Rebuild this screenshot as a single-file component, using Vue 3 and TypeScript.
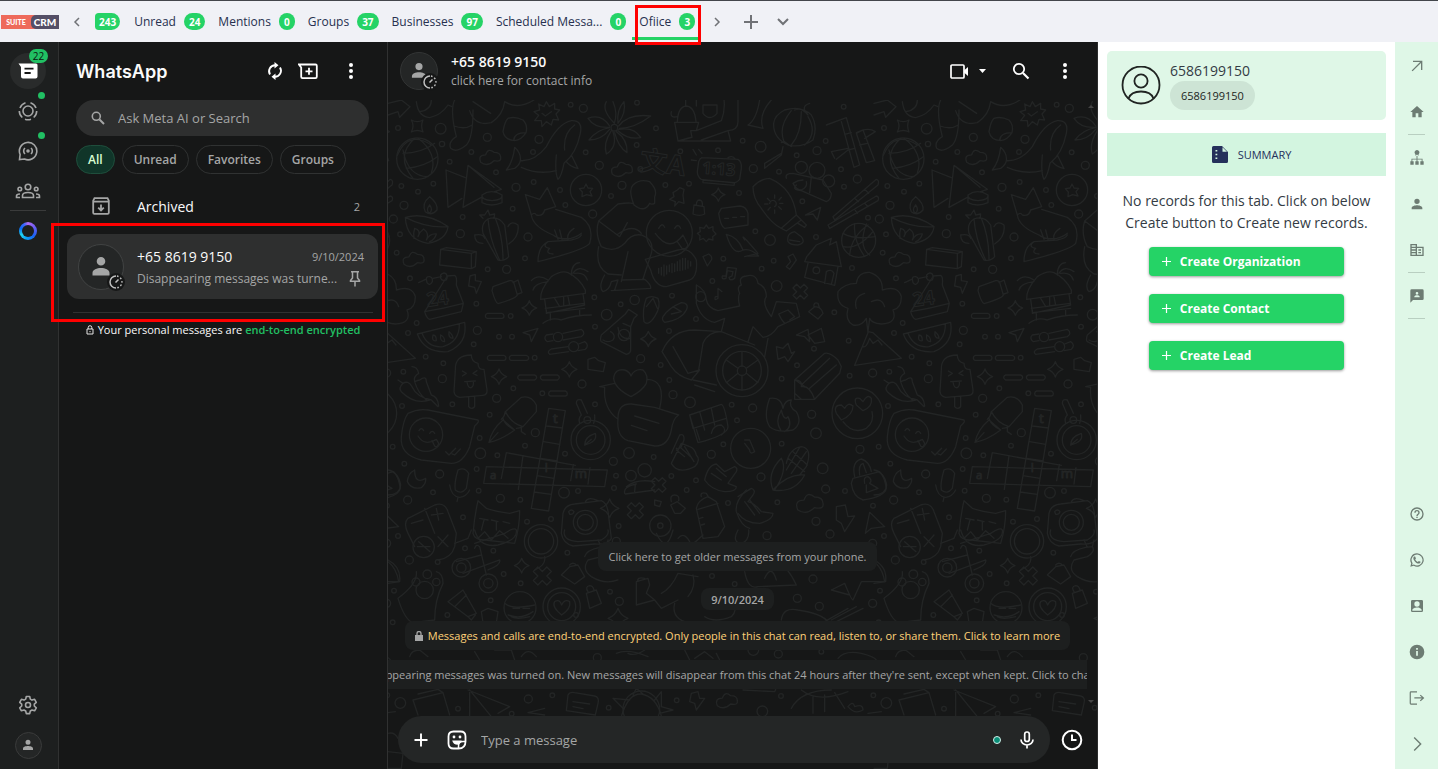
<script setup lang="ts">
import { ref } from 'vue'

interface Tab { label: string; count: number; active?: boolean }
type Dot = [number, number, number]

const tabs: Tab[] = [
  { label: 'Unread', count: 24 },
  { label: 'Mentions', count: 0 },
  { label: 'Groups', count: 37 },
  { label: 'Businesses', count: 97 },
  { label: 'Scheduled Messa...', count: 0 },
  { label: 'Ofiice', count: 3, active: true },
]

const filters = ['All', 'Unread', 'Favorites', 'Groups']
const activeFilter = ref('All')
const search = ref('')
const draft = ref('')

const createActions = ['Create Organization', 'Create Contact', 'Create Lead']

const toolsTop = [
  { name: 'Open', rule: false, d: 'M6 4v2h10.600L4 18.600 5.400 20 18 7.400V18h2V4z' },
  { name: 'Home', rule: true, d: 'M10 20v-6h4v6h5v-8h3L12 3 2 12h3v8z' },
  { name: 'Hierarchy', rule: false, d: 'M12 0a3.600 3.600 0 0 1 2.500 6.200L14 9l-1.200-2h-1.600L10 9l-.5-2.800A3.600 3.600 0 0 1 12 0zM11.300 9h1.400v4h7.600v4H22v5h-5v-5h2v-2.600h-6.300V17h1.800v5h-5v-5h1.800v-2.600H5V17h2v5H2v-5h1.700v-4h7.600z' },
  { name: 'Contact', rule: false, d: 'M12 12a4 4 0 1 0 0-8 4 4 0 0 0 0 8zm0 2c-2.700 0-8 1.300-8 4v2h16v-2c0-2.700-5.300-4-8-4z' },
  { name: 'Company', rule: true, d: 'M12 7V3H2v18h20V7H12zM10 19H4v-2h6v2zm0-4H4v-2h6v2zm0-4H4V9h6v2zm0-4H4V5h6v2zm10 12h-8V9h8v10zm-2-8h-4v2h4v-2zm0 4h-4v2h4v-2z' },
  { name: 'Contact messages', rule: true, d: 'M20 2H4a2 2 0 0 0-2 2v18l4-4h14a2 2 0 0 0 2-2V4a2 2 0 0 0-2-2zm-8 4a2 2 0 1 1 0 4 2 2 0 0 1 0-4zm4 8H8v-1c0-1.300 2.700-2 4-2s4 .7 4 2v1z' },
]
const toolsBottom = [
  { name: 'Help', d: 'M11 18h2v-2h-2v2zm1-16a10 10 0 1 0 0 20 10 10 0 0 0 0-20zm0 18a8 8 0 1 1 0-16 8 8 0 0 1 0 16zm0-14a4 4 0 0 0-4 4h2a2 2 0 1 1 4 0c0 2-3 1.750-3 5h2c0-2.250 3-2.500 3-5a4 4 0 0 0-4-4z' },
  { name: 'WhatsApp', d: 'M12 2a10 10 0 0 0-8.700 15L2 22l5.100-1.300A10 10 0 1 0 12 2zm0 18.200a8.200 8.200 0 0 1-4.600-1.400L4.600 19.500l.8-2.700A8.200 8.200 0 1 1 12 20.200zM8.500 6.700c-.3 0-.8.1-1.200.6-1.300 1.500-1 3.300.7 5.700 2.200 3 5 4.700 7.200 4.300 1.500-.3 2.200-1.200 2.200-2.500l-2.700-1.400-1.400 1.500c-1.700-.6-3.200-2-4-3.600l1.100-1.400-1-2.800c-.2-.4-.5-.4-.9-.4z' },
  { name: 'Account', d: 'M3 5v14a2 2 0 0 0 2 2h14a2 2 0 0 0 2-2V5a2 2 0 0 0-2-2H5a2 2 0 0 0-2 2zm13 4a4 4 0 1 1-8 0 4 4 0 0 1 8 0zM5 19v-1c0-2.200 4.500-3.600 7-3.600s7 1.400 7 3.600v1z' },
  { name: 'About', d: 'M12 1a11 11 0 1 0 0 22 11 11 0 0 0 0-22zm1.300 16.500h-2.600v-7h2.600v7zm0-9h-2.600V6h2.600v2.500z' },
  { name: 'Log out', d: 'M17.500 7l-1.200 1.200L19.200 11H8v1.800h11.200l-2.900 2.900 1.200 1.300L23 12zM4 3.600h8V2H3a2 2 0 0 0-2 2v16a2 2 0 0 0 2 2h9v-1.600H2.800V3.600z' },
  { name: 'Collapse', d: 'M7 3l1.500-1.500L19 12 8.500 22.500 7 21l9-9z' },
]

/* Wallpaper: one tile is 1458 units wide, three units to a pixel */
const dots: Dot[] = [
  [30,114,7],[158,116,16],[162,162,8],[298,142,12],[250,186,7],[185,215,7],[136,281,7],[90,305,7],[40,288,7],[48,346,12],[16,387,12],[36,433,7],[224,381,7],[217,431,12],[26,488,7],[299,538,7],[356,538,12],[411,505,7],[420,441,12],[374,356,7],[324,247,7],[384,292,12],[437,276,7],[435,186,7],[453,148,12],[548,44,7],[586,55,12],[593,187,7],[634,226,12],[516,300,7],[532,345,7],[614,372,12],[669,318,7],[702,286,12],[747,38,7],[804,115,7],[746,165,7],[757,237,7],[877,184,7],[832,285,7],[903,281,7],[990,181,7],[1064,152,7],[1053,309,7],[1006,506,7],[973,573,7],[924,687,7],[852,617,7],[740,630,14],[698,643,7],[656,674,16],[619,622,7],[621,710,7],[66,565,7],[265,641,7],[86,699,7],[60,729,7],[268,721,12],[257,763,7],[113,800,7],[166,820,7],[163,866,12],[46,845,7],[42,948,7],[193,943,7],[333,740,7],[372,740,7],[368,678,7],[440,803,7],[463,910,7],[582,882,12],[376,895,7],[326,925,12],[305,974,7],[621,943,7],[758,806,12],[818,825,7],[843,723,7],[844,870,7],[855,914,12],[906,937,16],[1031,944,7],[1047,991,7],[1006,1063,7],[970,1093,12],[850,1158,7],[924,1171,7],[896,1200,7],[797,1101,7],[723,1089,16],[676,1114,12],[684,1157,7],[678,1194,7],[531,1091,7],[442,1028,12],[411,1067,7],[277,1090,16],[275,1044,7],[328,1096,7],[266,1137,7],[155,1152,12],[49,1121,7],[14,1070,7],[135,1207,7],[59,1230,12],[272,1202,7],[337,1225,12],[397,1229,7],[417,1295,7],[225,1282,7],[489,1287,7],[528,1208,16],[570,1203,7],[692,1308,7],[1020,1239,7],
  [1118,170,16],[1287,182,12],[1313,153,7],[1226,196,7],[1096,236,12],[1173,245,7],[1359,238,7],[1408,267,12],[1368,290,7],[1243,334,7],[1440,383,7],[1146,450,16],[1102,424,7],[1284,441,7],[1157,512,7],[1121,536,7],[1166,588,16],[1392,534,7],[1339,667,7],[1382,752,7],[1278,776,7],[1227,826,7],[1181,866,7],[1385,857,7],[1454,849,12],[1094,954,12],[1271,973,12],[1284,1030,16],[1181,1061,7],[1119,1161,12],[1304,1135,16],[1313,1197,12],[1168,1237,7],[1371,1203,7],[1416,1078,12],[1284,1294,12],[1455,1247,7],[1367,50,7],
  [30,1338,7],[64,1410,12],[231,1375,7],[316,1382,7],[149,1416,7],[347,1452,7],[398,1480,7],[308,1531,7],[178,1575,7],[18,1502,7],[14,1597,7],[538,1388,7],[666,1505,7],[564,1575,7],[694,1534,12],[685,1354,12],[628,1703,12],[421,1827,12],[493,1816,7],[662,1853,7],[866,1831,7],[210,1856,7],[371,1871,7],[37,1839,16],[1123,1864,16],[1137,1337,12],[1040,1482,7],[972,1458,7],
  [1326,1332,12],[1454,1360,12],[1275,1467,12],[1228,1525,12],[1294,1549,12],[1454,1540,12],[1171,1692,12],[1300,1685,7],[1456,1816,7],[1179,1818,7],[1096,1680,16],
]
const sparkles: Dot[] = [[424,654,22],[333,860,23],[544,838,23],[781,747,23],[991,314,20],[665,1255,28],[401,1427,22],[690,1585,30]]
const clouds: Dot[] = [[308,202,30],[703,238,30],[78,508,30],[1267,1240,38],[1018,1832,30]]
const crosses: Dot[] = [[742,1262,24],[812,1185,22],[1237,605,22],[463,1458,27]]
const rings: Dot[] = [[88,206,62],[594,300,47],[844,430,69],[114,1034,50],[608,1050,59],[608,1050,43],[598,990,10],[510,741,14],[557,770,15],[708,735,17],[1088,1075,60],[1408,970,76],[1412,451,51],[1062,842,78],[1062,842,58],[1062,842,14],[592,1297,36],[592,1297,24],[817,1307,32],[817,1307,8],[770,1141,20],[729,1157,16],[1240,232,18],[1287,241,24],[1322,273,18],[220,1433,28],[220,1433,14],[301,1480,28],[301,1480,14],[110,1500,26],[84,1476,12],[118,1453,13],[145,1476,11],[107,1371,32],[459,1354,50],[459,1354,38],[521,1550,56],[521,1550,42],[396,1553,48],[760,1858,55],[679,113,10],[938,620,15],[1285,541,10]]

const sparkle = ([x, y, s]: Dot) => {
  const k = s / 4
  return `M${x} ${y - s}Q${x + k} ${y - k} ${x + s} ${y}Q${x + k} ${y + k} ${x} ${y + s}Q${x - k} ${y + k} ${x - s} ${y}Q${x - k} ${y - k} ${x} ${y - s}Z`
}
const cloud = ([x, y, s]: Dot) =>
  `M${x - s} ${y + s / 2}Q${x - s * 1.300} ${y - s / 4} ${x - s / 2} ${y - s / 4}Q${x - s / 4} ${y - s} ${x + s / 3} ${y - s / 2}Q${x + s} ${y - s / 2} ${x + s} ${y}Q${x + s * 1.100} ${y + s / 2} ${x + s / 3} ${y + s / 3}Q${x - s / 3} ${y + s} ${x - s} ${y + s / 2}Z`
const cross = ([x, y, s]: Dot) => {
  const h = s / 2
  return `M${x - s} ${y - h}L${x - h} ${y - s}L${x} ${y - h}L${x + h} ${y - s}L${x + s} ${y - h}L${x + h} ${y}L${x + s} ${y + h}L${x + h} ${y + s}L${x} ${y + h}L${x - h} ${y + s}L${x - s} ${y + h}L${x - h} ${y}Z`
}

const doodles: string[] = [
  // globe, ornament, stocking, patch
  'M28 196Q60 120 130 165M45 190Q100 190 140 160M55 235Q110 230 148 200M80 145Q20 200 75 265M90 145Q150 190 130 250M45 180Q60 260 120 260',
  'M85 35Q90 80 125 83Q160 75 180 45L192 50M95 65Q130 60 130 30M0 40L40 30L66 50L35 82L30 65L0 75',
  'M200 30Q185 60 205 140Q180 155 188 175Q205 190 235 165Q255 145 255 60M198 108Q230 120 253 105M245 62Q260 110 310 98Q345 75 350 35M255 35L308 70M350 35Q390 60 438 30',
  'M70 90Q88 100 105 90Q97 107 105 126Q88 117 70 126Q80 107 70 90Z',
  'M360 85Q380 78 405 90Q420 105 414 128Q400 150 380 152Q350 150 345 125Q350 95 360 85M377 152Q378 128 414 128',
  'M475 35L484 50L500 40L500 57L515 60L504 72L512 90L495 88L490 105L475 95L462 110L460 92L440 92L452 76L438 65L455 60L452 42L468 50ZM462 70L472 78L490 65',
  // whale
  'M355 240Q375 215 380 172Q400 190 397 212Q440 215 475 170Q510 100 550 92Q585 90 577 130Q565 190 528 220Q520 260 510 268Q500 250 505 195M355 240L380 235Q395 225 397 212M400 232Q450 255 505 242M550 195L570 236Q545 230 535 215M530 180Q525 130 560 105',
  // star anise
  'M679 100Q640 60 655 35M679 100Q690 70 675 35M690 100Q685 60 708 35M690 100Q715 70 708 35M692 108Q720 70 788 78M694 115Q740 115 788 78M692 118Q740 110 758 143M690 122Q720 150 758 143M685 125Q720 150 717 188M680 128Q690 170 717 188M675 125Q690 170 655 192M670 122Q645 160 655 192M665 118Q640 150 603 150M665 113Q625 120 603 150M665 108Q640 70 600 85M665 112Q620 115 600 85',
  // plant pot and sleeve
  'M860 97L932 97L925 122L908 122L912 142L870 153ZM868 95Q870 50 895 48Q920 50 924 95M868 80Q845 85 850 65M893 30V48M925 30V48M945 45V70Q965 95 987 70V45ZM908 142L870 153L1028 153L1020 122L940 150M925 122L1000 92Q1012 60 1008 30M1050 30V95Q1050 120 1020 122',
  // strokes near the clock
  'M915 178L925 195M932 178L942 190M910 210L925 212M942 203L1050 208Q1062 215 1060 235L1055 268Q1045 280 1030 278L940 268Q928 260 928 245L932 215Q935 205 942 203M945 270L1040 278L1038 286L945 278ZM1020 203Q1035 195 1042 208',
  'M174 240L232 263M174 240L180 352L222 325M240 226L225 352L280 322M240 226L340 298L320 305M240 226L318 292M282 315Q310 295 342 315Q345 330 312 332Q280 330 282 315V338Q310 352 342 338V315',
  'M594 282L600 294L614 295L606 305L612 318L596 314L582 320L583 306L574 296L588 294Z',
  // oil lamp
  'M52 382Q115 365 180 410Q175 450 120 460Q55 450 52 382Q115 415 180 410M125 320Q100 340 112 365Q130 380 147 360Q150 340 125 320M125 345Q112 360 124 370Q136 360 125 345M78 445Q75 430 80 415Q100 420 90 440Q95 425 107 417Q125 430 115 450Q125 430 145 432Q140 450 125 455',
  // cactus
  'M300 387Q330 375 350 405L362 500Q350 515 330 510L285 430Q278 400 300 387M300 387Q305 450 335 510M322 385Q345 440 345 508M285 385L275 375L290 375L300 360L305 375L320 372L318 385M285 460Q260 460 260 435Q285 430 290 445M362 462Q395 440 390 405Q370 390 360 410',
  'M158 478L175 473L265 485L262 530L250 536L155 525ZM158 478L250 490L250 536M250 490L265 485',
  // fox
  'M412 314L430 375Q440 365 445 375Q465 380 470 360L503 350L478 293L455 328L412 314M430 375Q435 410 495 435Q515 450 548 445Q570 440 580 430M503 358L580 382Q620 410 605 460Q590 480 450 515Q450 470 480 455L550 450Q575 445 580 435M500 420L510 448M515 420L522 448M540 448Q535 430 558 415M480 455Q460 470 485 475Q470 490 495 492',
  // reading figure and speech bubble
  'M632 393L690 342Q740 335 738 345M632 393L695 440L718 398M632 393Q620 430 640 470Q680 490 710 460Q730 430 760 435Q800 450 790 490L765 567M632 470Q620 530 660 552L700 555M720 485L700 575M650 555Q630 590 645 605Q665 600 670 575L690 570L680 600M700 570L770 568Q790 585 788 595L670 602M738 345Q720 300 735 285Q755 265 785 275Q810 300 800 320L800 340Q790 345 785 340Q770 370 738 345M690 432Q735 400 760 430',
  'M772 508L870 480Q905 470 925 510Q930 560 905 570L835 590Q800 590 788 540ZM812 535V550M820 532V555M828 525V558M836 528V552M844 525V545M852 520V548M860 522V545M868 515V542M876 510V542M884 505V540M892 505V538M900 512V535M908 515V528',
  'M812 415Q822 395 830 412M860 415Q870 398 878 415M802 430Q845 490 885 435L900 465Q895 480 882 475L868 455',
  // pushpin, lock, note, gear
  'M855 308L868 300L875 293L888 298L885 315L888 340L872 335L860 348L862 335L845 328L858 320ZM918 345L948 350L950 372Q935 380 915 372ZM925 345Q925 330 935 330Q945 332 943 348',
  'M935 412L948 415L955 405L962 415L975 410L975 422L984 432L974 440L975 450L962 447L955 455L946 445L935 450L936 437L928 430L937 425Z',
  'M1000 355L1056 348Q1075 350 1080 370V405L1010 415Q998 410 992 370ZM1010 385H1022M1034 382H1046M1058 380H1070M1015 433Q1050 440 1065 480Q1035 500 1015 433M1065 480Q1090 475 1112 498H1080',
  'M945 500L962 492Q975 500 970 510L958 528ZM1018 532L1045 535L1040 565Q1025 575 1023 562L1032 558L1035 545L1018 542L1014 565Q1000 570 1003 558L1014 558ZM990 595L1002 605M990 595V625Q978 635 982 620H990',
  // calendar, bolt, camera
  'M92 578L113 568M135 565L160 560M178 558L200 556Q208 560 205 585L226 640L220 665L125 688Q115 685 110 665ZM110 665Q170 655 226 640',
  'M115 568Q115 558 125 560Q135 562 133 575Q125 590 117 578ZM158 555Q165 545 175 552Q180 560 175 570Q162 575 158 565ZM246 558L262 553L262 572L280 575L265 610L260 592L242 588Z',
  'M315 590L365 572Q375 570 378 580L388 615Q385 625 330 641Q322 638 312 602ZM375 578L390 570L402 608L390 612',
  // beach hut
  'M458 628Q455 600 490 560Q520 540 540 548Q575 565 592 600V610L458 628M470 628L475 665M585 612L590 645L475 670M472 655L588 640M500 625L515 650L545 645L540 620M527 622V648M475 660V668L590 655M487 670V690M575 660V675M465 700Q490 680 520 690Q560 675 610 675M430 572Q450 550 480 570M435 600Q440 580 480 575M550 555Q550 520 575 518M555 550Q570 525 600 545M560 550Q590 545 598 570',
  'M298 670H342Q348 672 348 678Q348 685 342 685H298Q292 684 292 678Q292 672 298 670ZM304 796H348Q354 798 354 803Q354 810 348 811H304Q298 810 298 803Q298 798 304 796ZM370 796H415Q422 798 422 803Q422 810 415 811H370Q364 810 364 803Q364 798 370 796ZM395 855H440Q446 857 446 862Q446 868 440 870H395Q389 868 389 862Q389 857 395 855ZM463 855H508Q514 857 514 862Q514 868 508 870H463Q457 868 457 862Q457 857 463 855ZM488 903H532Q538 905 538 911Q538 917 532 918H488Q482 917 482 911Q482 905 488 903Z',
  'M405 728L450 715L430 755L425 735ZM495 732L475 735Q465 745 478 755L495 752M525 730L580 718Q595 730 580 740L525 750M540 770L490 777Q475 785 485 793L542 785M572 762L590 755Q605 765 592 778L570 782',
  // pizza, sandals
  'M712 672L640 735Q635 750 640 755L715 793Q730 790 728 775V710M712 672L722 658L748 675L738 685L728 710M705 700L728 710M690 712Q695 750 728 745M668 725Q685 735 675 750Q660 760 645 750',
  'M775 625Q790 615 810 625Q820 650 800 680Q780 710 768 695Q762 660 775 625M775 650L795 625L808 655M825 680Q840 655 880 638Q905 640 895 660Q880 690 830 697Q820 690 825 680M855 650L880 665L850 672',
  // flute player and bicycle
  'M925 585Q955 600 955 630Q960 655 990 662L1055 648Q1048 620 1055 610Q1045 590 1060 585Q1050 560 1075 558Q1105 550 1110 580Q1135 590 1135 620Q1120 640 1150 680L1165 635L1225 640L1235 680L1170 710Q1150 740 1125 742L1095 710L1080 755M925 585L925 640Q940 690 980 697L1010 685L1000 725M1000 725Q960 725 945 760L932 840M822 785Q850 720 920 720L1000 725M822 785L850 830Q870 860 910 870L935 840L900 850L855 770M915 870L985 885M920 885L980 905M1000 725L1100 765M1140 745L1130 800M1062 784V828M1062 856V900M1015 810L1050 835M1110 810L1075 835M1015 878L1050 850M1110 878L1075 850',
  'M635 890L650 892Q645 955 690 988M635 890L680 880M729 920Q680 895 677 865Q680 835 710 840Q725 845 729 858Q740 835 765 840Q782 855 775 880Q765 900 729 920M778 868Q835 870 815 955M690 985Q690 940 730 942L800 952L872 975Q855 985 850 1020Q840 1070 800 1068L720 1052Q685 1040 690 985M740 978L813 1000M730 1006L777 1022',
  'M600 808L620 802L632 812L652 818L646 845L600 838ZM905 975L1000 943Q1010 945 1020 1010Q1020 1035 930 1058ZM905 975L915 1015L1015 985M935 965L950 1020M970 955L980 1005M925 1018L935 1050M970 1030Q975 1005 1000 1005Q1020 1020 1000 1035',
  // watermelon, chili, ice lolly
  'M88 732L230 697Q240 760 180 785Q110 790 88 732M102 730Q120 775 165 770Q215 755 214 702M135 735Q145 735 145 752Q130 755 135 735M158 735Q170 740 170 755Q155 755 158 735M183 725Q195 735 195 745Q180 745 183 725',
  'M30 870L45 880Q60 870 72 890Q85 920 130 930Q150 950 150 950M45 880Q30 895 40 905Q80 945 125 930M72 830Q88 830 92 850Q75 860 80 875Q90 870 95 870Q115 855 115 875L130 915Q150 920 152 948M80 875Q90 910 115 930',
  'M250 795Q200 795 202 840L198 905Q200 920 215 922L285 916Q298 915 297 900L288 838Q270 840 270 820Q250 815 250 795M242 922V950Q250 960 260 950V920M223 843L235 850L223 858M267 842L255 850L267 856M230 875L262 873M237 876Q240 895 250 893Q258 888 256 875',
  // chat bubble with smile
  'M60 970Q90 955 120 960L270 990Q275 995 260 1008L245 1070Q225 1120 190 1120L100 1110Q35 1095 40 1040Q45 990 60 970M93 1022Q100 1010 107 1022M125 1030Q133 1018 140 1030M90 1038Q110 1070 145 1048L152 1060Q148 1075 140 1068L132 1052M173 1085L183 1095L203 1075M192 1092L200 1095L217 1077',
  // fountain pen, crossword, keychain
  'M303 1057Q310 1020 345 990L380 1020Q340 1050 303 1057M303 1057L330 1028M340 988Q350 980 352 965L400 922Q430 915 445 945V965L405 1010Q395 1015 385 1015M345 985Q350 1005 380 1020M352 965Q370 1000 405 1010M400 1010V1025L412 1033',
  'M482 955L532 962L482 1263L430 1255ZM295 1130L658 1140L650 1190L287 1180ZM355 1088L562 1126M355 1088L340 1165M405 1097L391 1198M475 1008L524 1014M467 1055L515 1063M459 1105L508 1113M447 1157L498 1165M438 1206L490 1213M556 1124L548 1172M606 1133L600 1182',
  'M565 940Q565 925 580 930L598 970M565 940L580 975Q570 985 575 1000M620 975Q622 985 617 1000M590 1065Q590 1040 622 1030Q630 1055 590 1065L610 1048',
  // hands and people
  'M850 1090L875 1035Q890 1030 888 1050L880 1070Q870 1080 865 1075M880 1060L905 1070Q920 1075 925 1095Q940 1110 920 1130Q870 1155 850 1120ZM865 1080L890 1100M880 1075L908 1100M890 1070L918 1115',
  'M950 1170Q960 1125 985 1122L1010 1145L1040 1130Q1050 1135 1045 1145L1020 1180L1045 1190Q1045 1205 1010 1205Q970 1200 950 1170M970 1150L1000 1170M985 1135L1015 1160M715 1190Q745 1165 800 1175M710 1210Q705 1190 745 1182M712 1212L800 1200M740 1205L742 1182',
  'M0 1140Q30 1145 38 1185Q35 1215 0 1215M80 1140Q60 1150 58 1175Q70 1200 100 1193Q115 1180 113 1165Q80 1185 80 1140M210 1140Q230 1130 242 1150L235 1195Q220 1215 202 1200Q198 1180 210 1140M185 1185Q190 1220 215 1222Q235 1220 245 1200M210 1222L207 1235',
  'M60 1285L140 1245Q170 1235 180 1265L205 1330L200 1370Q190 1405 150 1410M60 1285Q45 1300 60 1330L80 1370M110 1255L140 1330M70 1300L105 1290M130 1275L165 1270M145 1255L152 1290M150 1340L180 1370M150 1370L180 1335M88 1370H126M92 1355L126 1385',
  'M255 1330Q260 1275 270 1232L295 1255Q325 1265 365 1270L395 1262Q395 1310 380 1360L290 1350Q260 1350 255 1330M275 1285L300 1290M288 1290L280 1320M310 1290L330 1295M325 1295V1320M345 1295L365 1300',
  'M520 1330L525 1270Q530 1245 560 1242L640 1232Q660 1240 662 1280L670 1345Q660 1365 620 1362L555 1368Q525 1360 520 1330M592 1235Q600 1218 630 1232M542 1265Q550 1255 558 1265Q555 1275 545 1273Z',
  'M848 1245L868 1235L892 1255L878 1270L860 1270ZM850 1235Q845 1215 860 1215Q875 1215 872 1232M925 1255Q930 1230 960 1220L985 1235L1010 1310L990 1340L945 1345ZM940 1220Q935 1205 955 1210L962 1222M930 1258L990 1240M935 1285L945 1282M940 1305L950 1302M1075 1200Q1040 1235 1045 1265Q1060 1310 1085 1315M800 1230L820 1235L815 1250L800 1245Z',
  // trumpet, lantern, bamboo, chopsticks
  'M1080 105L1125 115Q1110 75 1150 30M1080 105Q1105 90 1115 30M1190 60Q1240 45 1270 75Q1290 110 1275 150Q1240 175 1200 165Q1155 145 1157 100Q1160 75 1190 60M1210 62Q1170 110 1188 155M1240 65Q1240 130 1210 165M1260 80Q1290 130 1250 165M1220 60Q1240 50 1260 75L1250 60Q1245 45 1265 40M1180 158L1190 155L1210 170M1185 170L1180 195L1130 235V220L1180 190',
  'M1315 105L1375 83L1415 225L1398 232L1360 95M1370 133L1390 128M1380 180L1400 175M1405 130L1425 120L1460 212L1435 218ZM1415 165L1438 160M1340 205L1330 185L1380 175M1345 208L1380 180M1405 128Q1440 110 1462 125L1430 145',
  'M1335 380L1465 268Q1475 270 1470 285L1340 390ZM1320 405L1465 318Q1475 320 1470 332L1325 415ZM1400 325L1412 335M1430 298L1442 310M1400 358L1408 370M1430 340L1440 350',
  'M1095 290Q1120 265 1145 265Q1215 295 1225 375L1180 415Q1150 400 1120 355Q1095 325 1095 290M1180 415L1195 423L1240 390L1225 375M1225 375L1255 405L1250 412L1230 400M1145 340A10 10 0 1 1 1160 350M1160 315V325M1138 325L1145 332M1130 342H1140M1140 360L1147 352M1160 370V360M1185 340H1175M1180 322L1173 330M1180 358L1172 350',
  'M1195 265Q1190 250 1215 250L1305 270L1330 310Q1330 330 1315 335L1240 302Q1210 300 1225 285M1270 260L1265 308M1245 270Q1230 270 1215 280Q1225 300 1240 300Q1260 290 1255 275M1252 375L1298 352L1288 390L1275 372Z',
  'M1365 430Q1400 450 1462 440M1365 470Q1410 480 1455 425M1385 495Q1390 440 1440 405M1430 500Q1395 450 1400 402M1435 402Q1410 470 1445 495M1200 455Q1195 430 1220 425L1240 440Q1255 460 1230 465Q1205 465 1200 455M1205 450L1235 455M1070 450Q1050 420 1110 490L1070 500M1256 500Q1265 490 1285 465L1330 445L1325 465L1345 455L1360 530L1250 515ZM1260 520L1250 562L1340 586L1350 530M1310 580L1315 545Q1330 535 1338 550L1330 583',
  'M1200 500L1215 492L1225 510L1205 538L1195 530L1208 515Z',
  // volcano
  'M1405 580Q1410 545 1445 547Q1485 560 1483 600Q1530 585 1540 620Q1540 655 1515 660Q1530 700 1480 702Q1450 700 1445 685L1440 725L1455 728L1540 805L1400 826L1440 728L1435 685Q1420 710 1395 705Q1370 690 1380 655Q1345 645 1350 605Q1370 580 1405 580M1405 655Q1395 620 1430 610M1450 635Q1480 620 1490 650M1425 770Q1435 775 1445 745L1455 760L1470 750L1482 765',
  // pencil, fire, hearts
  'M1220 870L1310 790Q1325 785 1350 810L1360 830L1355 850L1280 928H1220ZM1220 870Q1245 870 1240 890Q1265 885 1280 928M1240 885L1325 805M1265 895L1345 825M1220 910L1240 928M1222 870L1250 890',
  'M1145 925Q1180 920 1185 955Q1190 930 1210 930Q1200 950 1225 965Q1245 1000 1215 1020Q1170 1030 1145 1010Q1125 980 1145 925M1178 1020Q1160 995 1180 960Q1185 985 1195 985L1200 980Q1215 1010 1190 1025',
  'M1345 970Q1335 945 1360 945L1370 955Q1380 935 1395 948Q1395 975 1360 990ZM1405 945Q1395 920 1415 925L1425 935Q1440 910 1450 925Q1455 950 1425 962ZM1365 995Q1395 1035 1435 1015Q1460 995 1452 965',
  // padlock, corn, lion hand
  'M1395 1165L1475 1145Q1490 1160 1495 1195Q1490 1220 1425 1230Q1395 1220 1390 1180ZM1400 1160Q1390 1115 1420 1107Q1445 1115 1450 1145M1415 1155Q1410 1125 1425 1120L1435 1148M1430 1180Q1425 1160 1440 1160Q1455 1170 1445 1180L1470 1195L1435 1208L1435 1185',
  'M1155 1200Q1135 1150 1180 1105Q1200 1140 1160 1200M1155 1200Q1200 1150 1250 1155Q1220 1210 1155 1200M1195 1120Q1205 1075 1240 1070Q1275 1075 1255 1130L1235 1155M1200 1105L1250 1145M1215 1085L1258 1125M1235 1072L1195 1140M1255 1085L1210 1150',
  'M1050 1220L1090 1195Q1105 1200 1095 1215L1080 1235Q1100 1240 1120 1265L1155 1270Q1155 1290 1115 1300Q1070 1300 1050 1270M1070 1235L1100 1275M1085 1230L1115 1270M1345 1250L1372 1245L1380 1280L1400 1278L1370 1325L1360 1300L1345 1290ZM1445 1267L1490 1310L1450 1315L1432 1330Z',
  'M1190 700Q1180 690 1172 672L1200 660L1220 680L1205 690M1225 735L1260 718L1265 755L1250 740ZM1280 760L1260 735L1300 715L1310 755ZM1262 665L1280 650Q1300 650 1305 670L1290 687ZM1278 652Q1275 635 1290 640L1295 655M1165 770L1185 775L1200 760L1210 790L1220 785L1200 815L1190 800L1170 808Z',
  'M1070 1050L1085 1050L1100 1085Q1085 1095 1085 1080L1070 1060',
  // lower rows
  'M260 1360Q290 1350 350 1330Q380 1310 385 1320M260 1320Q275 1375 330 1365Q390 1350 385 1320M270 1345L290 1325L310 1350L335 1322L360 1345M530 1320Q520 1350 570 1355L640 1350Q665 1335 660 1320',
  'M205 1415L280 1395M225 1450L335 1410Q340 1425 300 1440M260 1375Q265 1360 275 1370L295 1455M250 1320L240 1345L200 1360M440 1440Q475 1425 470 1400',
  'M30 1525Q90 1480 85 1445M30 1525Q50 1590 75 1598L140 1590M140 1590Q140 1530 165 1480Q165 1450 145 1445M0 1410Q40 1430 35 1475L0 1480',
  'M180 1535L225 1500L265 1570L240 1580ZM240 1580L250 1590L262 1575M200 1550L235 1515M280 1565L300 1555L330 1565L325 1598M280 1565L285 1598M350 1540Q370 1560 440 1545M360 1575Q400 1590 435 1565M375 1555H395M405 1555H425M370 1580Q385 1590 425 1580',
  'M521 1575Q490 1550 500 1535Q515 1525 521 1545Q530 1525 545 1535Q550 1555 521 1575M545 1430L570 1425L590 1460L560 1482L520 1455ZM545 1425Q555 1415 565 1425',
  'M595 1510L625 1500L640 1540L605 1555ZM600 1505Q590 1490 605 1487Q615 1487 618 1500M590 1400Q595 1380 635 1372L655 1370Q665 1385 640 1400L600 1410Q580 1440 610 1460Q650 1485 690 1470M640 1372L630 1350M655 1370L660 1350',
  'M745 1475L780 1465L785 1485L775 1510L800 1530L745 1545ZM750 1475Q745 1460 770 1465M800 1530L820 1555L870 1530M820 1510Q850 1495 870 1450L930 1460M860 1540Q850 1580 890 1595M900 1520Q925 1490 915 1455M950 1580Q980 1600 1030 1580Q1050 1560 1035 1545M805 1330Q835 1395 855 1320M870 1345Q890 1320 910 1365Q930 1350 945 1335',
  'M1050 1320Q1030 1355 1060 1362Q1085 1350 1082 1320M1070 1445Q1080 1500 1110 1490L1225 1485Q1200 1430 1170 1420M1130 1465Q1150 1420 1165 1470M1330 1500L1370 1480Q1390 1530 1395 1530L1420 1475L1490 1475Q1480 1410 1420 1400M1330 1500L1385 1515M1180 1590Q1185 1550 1230 1560Q1300 1570 1320 1595M1330 1590L1405 1550M1345 1595L1425 1555M1310 1595L1380 1555',
  'M65 1700Q70 1680 95 1680L120 1700M260 1685L275 1710M320 1680H370L380 1710M400 1700Q420 1670 445 1700M685 1690Q720 1675 780 1700M720 1690Q740 1700 770 1680M890 1680L905 1710M920 1705L950 1685L975 1705M985 1690L995 1710M1350 1705Q1370 1680 1420 1690Q1460 1700 1465 1710',
  'M75 1830L165 1808L185 1875M75 1830L90 1875M90 1812L150 1798L165 1808M240 1800L365 1850L330 1870M245 1800L245 1880M245 1800L310 1880M470 1875L420 1868L470 1855',
  'M540 1815Q545 1805 560 1808L620 1818Q635 1822 630 1840L622 1875L535 1862ZM555 1835L605 1842M555 1850L585 1856M700 1880Q720 1810 760 1812Q805 1820 820 1878M705 1855L675 1825L725 1830M735 1815L745 1795L765 1812M800 1830L820 1805L820 1850L855 1860L815 1870M910 1810L930 1805L935 1825L950 1825L925 1860L920 1840L905 1835Z',
  'M1065 1800L1160 1805Q1170 1790 1150 1770M1210 1855Q1240 1800 1330 1800M1240 1800Q1290 1840 1380 1805M1275 1820V1870M1310 1815V1865M1340 1808L1370 1855M1380 1850Q1395 1830 1400 1850Q1425 1840 1425 1860Q1400 1875 1380 1850M1440 1870L1480 1865',
  'M0 1985L45 1990L40 2035H0M0 1930Q20 1925 30 1945',
]
</script>

<template>
  <div class="app">
    <header class="topbar">
      <div class="brand" aria-label="SuiteCRM">
        <span class="brand-suite">SUITE</span><span class="brand-crm">CRM</span>
      </div>
      <button class="plain arrow" aria-label="Previous tabs">
        <svg width="8" height="10" viewBox="0 0 8 10"><path d="M6 1L2 5l4 4" class="ln" /></svg>
      </button>
      <span class="badge first">243</span>
      <nav class="tabs">
        <button v-for="t in tabs" :key="t.label" class="tab" :class="{ active: t.active }">
          <span>{{ t.label }}</span><span class="badge">{{ t.count }}</span>
          <i v-if="t.active" class="mark mark-tab"></i>
        </button>
      </nav>
      <button class="plain arrow next" aria-label="Next tabs">
        <svg width="8" height="10" viewBox="0 0 8 10"><path d="M2 1l4 4-4 4" class="ln" /></svg>
      </button>
      <button class="plain add" aria-label="Add tab">
        <svg width="16" height="16" viewBox="0 0 16 16"><path d="M8 1v14M1 8h14" class="ln" /></svg>
      </button>
      <button class="plain more" aria-label="More tabs">
        <svg width="14" height="9" viewBox="0 0 14 9"><path d="M2 2l5 5 5-5" class="ln" /></svg>
      </button>
    </header>

    <main class="body">
      <nav class="rail">
        <button class="rail-btn current" aria-label="Chats">
          <svg width="20" height="18" viewBox="0 0 20 18"><path d="M.5 1.500H18A1.500 1.500 0 0 1 19.500 3v11.500a2 2 0 0 1-2 2H5a2 2 0 0 1-2-2V5z" fill="#fff" /><path d="M6.500 6.700h9M6.500 11h6.200" stroke="#161717" stroke-width="1.800" /></svg>
          <span class="rail-count">22</span>
        </button>
        <button class="rail-btn" aria-label="Status">
          <svg width="20" height="20" viewBox="0 0 20 20" class="gl"><circle cx="10" cy="10" r="5" /><path d="M12.500 1.700A8.700 8.700 0 0 1 18 7M18.700 10a8.700 8.700 0 0 1-3 6.500M13 18.200a8.700 8.700 0 0 1-6 0M4.300 16.500a8.700 8.700 0 0 1-3-6.500M2 7a8.700 8.700 0 0 1 5.500-5.300" /></svg>
          <i class="dot"></i>
        </button>
        <button class="rail-btn" aria-label="Channels">
          <svg width="20" height="20" viewBox="0 0 20 20" class="gl"><path d="M1.500 18.500l.6-5A8.700 8.700 0 1 1 6.500 18z" /><circle cx="10" cy="10" r="1" fill="#a5a6a6" /><path d="M7 7a4 4 0 0 0 0 6M13 7a4 4 0 0 1 0 6" /></svg>
          <i class="dot"></i>
        </button>
        <button class="rail-btn short" aria-label="Communities">
          <svg width="26" height="18" viewBox="0 0 26 18" class="gl"><circle cx="13" cy="5" r="2.800" /><circle cx="4.800" cy="7" r="1.800" /><circle cx="21.200" cy="7" r="1.800" /><path d="M7.500 15.500v-2q0-3 5.500-3t5.500 3v2zM5 15.500H1.500V14q0-2 3.500-2M21 15.500h3.500V14q0-2-3.500-2" /></svg>
        </button>
        <hr class="rail-rule" />
        <button class="rail-btn" aria-label="Meta AI"><span class="meta-ring"></span></button>
        <span class="grow"></span>
        <button class="rail-btn" aria-label="Settings">
          <svg width="20" height="20" viewBox="0 0 20 20" class="gl"><path d="M8.300 1.500h3.400l.6 2.600 1.700 1 2.600-.8 1.700 3-2 1.800v1.900l2 1.800-1.700 3-2.600-.8-1.700 1-.6 2.600H8.300l-.6-2.600-1.700-1-2.600.8-1.700-3 2-1.800V9.100l-2-1.800 1.700-3 2.600.8 1.700-1z" stroke-linejoin="round" /><circle cx="10" cy="10" r="2.500" /></svg>
        </button>
        <button class="rail-btn" aria-label="Profile">
          <span class="me"><svg width="12" height="12" viewBox="0 0 24 24"><path d="M12 11.500a5 5 0 1 0 0-10 5 5 0 0 0 0 10zm0 2.500c-4 0-10 1.500-10 5v3h20v-3c0-3.500-6-5-10-5z" fill="#a5a6a6" /></svg></span>
        </button>
      </nav>

      <section class="list">
        <div class="list-head">
          <h1>WhatsApp</h1>
          <button class="plain" aria-label="Refresh"><svg width="16" height="18" viewBox="0 0 16 18"><path d="M8 3.200a6 6 0 0 0-5 9.200M8 14.800a6 6 0 0 0 5-9.200" fill="none" stroke="#fff" stroke-width="1.900" /><path d="M7.500 0v6.500L11.500 3.200zM8.500 18v-6.500L4.500 14.800z" fill="#fff" /></svg></button>
          <button class="plain newchat" aria-label="New chat"><svg width="20" height="17" viewBox="0 0 20 17" fill="none" stroke="#fff" stroke-width="1.800"><path d="M1 1.500h16.500a1.300 1.300 0 0 1 1.300 1.300v11a1.300 1.300 0 0 1-1.300 1.300h-13a1.300 1.300 0 0 1-1.300-1.300V4.500zM11 4.800v7M7.500 8.300h7" /></svg></button>
          <button class="plain" aria-label="Menu"><svg width="4" height="16" viewBox="0 0 4 16" fill="#fff"><circle cx="2" cy="2" r="2" /><circle cx="2" cy="8" r="2" /><circle cx="2" cy="14" r="2" /></svg></button>
        </div>

        <label class="search">
          <svg width="14" height="14" viewBox="0 0 14 14" fill="none" stroke="#a5a6a6"><circle cx="5.300" cy="5.300" r="4" stroke-width="1.600" /><path d="M8.500 8.500l4.500 4.500" stroke-width="1.900" /></svg>
          <input v-model="search" type="text" placeholder="Ask Meta AI or Search" aria-label="Ask Meta AI or Search" />
        </label>

        <div class="chips">
          <button v-for="f in filters" :key="f" class="chip" :class="{ on: f === activeFilter }" @click="activeFilter = f">{{ f }}</button>
        </div>

        <button class="archived">
          <svg width="18" height="18" viewBox="0 0 18 18" fill="none" stroke="#a5a6a6" stroke-width="1.800"><path d="M2.500 1.200h13l1.300 2.500v12a1.200 1.200 0 0 1-1.200 1.200H2.400a1.200 1.200 0 0 1-1.200-1.200v-12zM1 4.700h16M9 7.500v6M6.200 10.700L9 13.500l2.800-2.800" /></svg>
          <span>Archived</span><small>2</small>
        </button>

        <div class="pinned">
          <button class="chat-item">
            <span class="avatar big">
              <svg width="24" height="24" viewBox="0 0 24 24"><path d="M12 10.500a4.300 4.300 0 1 0 0-8.600 4.300 4.300 0 0 0 0 8.600zm0 2.500c-4 0-8.500 1.500-8.500 5v2.500h17V18c0-3.500-4.500-5-8.500-5z" fill="#a5a6a6" /></svg>
              <span class="timer"><svg width="14" height="14" viewBox="0 0 14 14" fill="none" stroke="#c0c1c1" stroke-width="1.500"><path d="M7 1a6 6 0 1 0 0 12M6.500 7.500L9.500 4.500" /><path d="M8 1.100a6 6 0 0 1 0 11.800" stroke-dasharray="1.600 2" /></svg></span>
            </span>
            <span class="chat-text">
              <span class="row"><b>+65 8619 9150</b><time>9/10/2024</time></span>
              <span class="row"><span class="preview">Disappearing messages was turne...</span>
                <svg width="12" height="16" viewBox="0 0 12 16" fill="none" stroke="#a5a6a6" stroke-width="1.500"><path d="M2 .8h8M3.500 1v6L1.500 9.500v.8h9v-.8L8.500 7V1M6 10.500v5" /></svg></span>
            </span>
          </button>
          <i class="mark mark-chat"></i>
        </div>

        <p class="e2e">
          <svg width="8" height="10" viewBox="0 0 8 10" fill="none" stroke="#e5e5e5"><path d="M1 4h6v5H1zM2.200 4V2.500a1.800 1.800 0 0 1 3.600 0V4M4 6v1.200" /></svg>
          <span>Your personal messages are <a href="#">end-to-end encrypted</a></span>
        </p>
      </section>

      <section class="chat">
        <header class="chat-head">
          <span class="avatar">
            <svg width="20" height="20" viewBox="0 0 24 24"><path d="M12 11a4.300 4.300 0 1 0 0-8.600A4.300 4.300 0 0 0 12 11zm0 2.500c-4 0-8.500 1.500-8.500 5V20h17v-1.500c0-3.500-4.500-5-8.500-5z" fill="#a5a6a6" /></svg>
            <span class="timer"><svg width="14" height="14" viewBox="0 0 14 14" fill="none" stroke="#c0c1c1" stroke-width="1.500"><path d="M7 1a6 6 0 1 0 0 12M6.500 7.500L9.500 4.500" /><path d="M8 1.100a6 6 0 0 1 0 11.800" stroke-dasharray="1.600 2" /></svg></span>
          </span>
          <div class="peer"><b>+65 8619 9150</b><span>click here for contact info</span></div>
          <button class="plain video" aria-label="Video call">
            <svg width="19" height="15" viewBox="0 0 19 15"><rect x="1" y="1" width="13" height="13" rx="1" fill="none" stroke="#fff" stroke-width="1.700" /><path d="M14 6.500l4-3.500v9l-4-3.500z" fill="#fff" /></svg>
            <svg width="7" height="4" viewBox="0 0 7 4"><path d="M0 0h7L3.500 4z" fill="#fff" /></svg>
          </button>
          <button class="plain find" aria-label="Search messages"><svg width="18" height="18" viewBox="0 0 18 18" fill="none" stroke="#fff"><circle cx="7" cy="7" r="5.200" stroke-width="1.800" /><path d="M11 11l5.500 5.500" stroke-width="2.200" /></svg></button>
          <button class="plain" aria-label="Chat menu"><svg width="4" height="16" viewBox="0 0 4 16" fill="#fff"><circle cx="2" cy="2" r="2" /><circle cx="2" cy="8" r="2" /><circle cx="2" cy="14" r="2" /></svg></button>
        </header>

        <div class="canvas">
          <svg class="wallpaper" aria-hidden="true">
            <defs>
              <g id="tile">
                <circle v-for="(c, i) in dots" :key="'d' + i" :cx="c[0]" :cy="c[1]" :r="c[2]" />
                <circle v-for="(c, i) in rings" :key="'r' + i" :cx="c[0]" :cy="c[1]" :r="c[2]" />
                <path v-for="(s, i) in sparkles" :key="'s' + i" :d="sparkle(s)" />
                <path v-for="(s, i) in clouds" :key="'c' + i" :d="cloud(s)" />
                <path v-for="(s, i) in crosses" :key="'x' + i" :d="cross(s)" />
                <path v-for="(d, i) in doodles" :key="'p' + i" :d="d" />
                <text x="115" y="645" font-size="58" font-weight="700" transform="rotate(-8 155 620)">24</text>
                <text x="942" y="254" font-size="50" font-weight="700" transform="rotate(4 990 240)">1:13</text>
                <text x="756" y="248" font-size="82" font-weight="700" transform="rotate(8 820 210)">文A</text>
                <text x="306" y="1168" font-size="34">a</text>
                <text x="495" y="1000" font-size="40">t</text>
                <text x="470" y="1146" font-size="36">i</text>
                <text x="560" y="1164" font-size="40">m</text>
              </g>
            </defs>
            <g transform="scale(.33333) translate(0 -30)">
              <use href="#tile" x="-1458" /><use href="#tile" /><use href="#tile" x="1458" />
            </g>
          </svg>
          <i class="tri up"></i><i class="tri down"></i>

          <div class="messages">
            <button class="pill">Click here to get older messages from your phone.</button>
            <span class="pill date">9/10/2024</span>
            <button class="pill notice">
              <svg width="8" height="10" viewBox="0 0 8 10"><path d="M0 4h8v6H0z" fill="#a5a6a6" /><path d="M2 4V2.500a2 2 0 0 1 4 0V4" fill="none" stroke="#a5a6a6" stroke-width="1.300" /></svg>
              Messages and calls are end-to-end encrypted. Only people in this chat can read, listen to, or share them. Click to learn more
            </button>
            <div class="clip"><button class="pill wide">Disappearing messages was turned on. New messages will disappear from this chat 24 hours after they're sent, except when kept. Click to change.</button></div>
          </div>

          <footer class="composer">
            <div class="compose-box">
              <button class="plain" aria-label="Attach"><svg width="14" height="14" viewBox="0 0 14 14"><path d="M7 .5v13M.5 7h13" stroke="#fff" stroke-width="1.900" /></svg></button>
              <button class="plain sticker" aria-label="Stickers"><svg width="20" height="20" viewBox="0 0 20 20" fill="none" stroke="#fff" stroke-width="1.800"><path d="M6.500 1.500h7q5 0 5 5v5q0 7-7 7h-5q-5 0-5-5v-7q0-5 5-5z" /><path d="M18.500 11.500h-2.500q-4.500 0-4.500 4.500v2.500" stroke-width="1.500" /><path d="M5.200 10.500h9.600l-3.300 4.200q-5.300.3-6.300-4.200z" fill="#fff" stroke="none" /><circle cx="7" cy="7" r="1.400" fill="#fff" stroke="none" /><circle cx="13" cy="7" r="1.400" fill="#fff" stroke="none" /></svg></button>
              <input v-model="draft" type="text" placeholder="Type a message" aria-label="Type a message" />
              <i class="status"></i>
              <button class="plain" aria-label="Record"><svg width="14" height="18" viewBox="0 0 14 18" fill="none" stroke="#fff" stroke-width="1.700"><rect x="4.700" y="1" width="4.600" height="9.500" rx="2.300" /><path d="M1 8.500a6 5.500 0 0 0 12 0M7 14v3.500" /></svg></button>
            </div>
            <button class="plain" aria-label="Schedule"><svg width="22" height="22" viewBox="0 0 22 22" fill="none" stroke="#fff" stroke-width="2"><circle cx="11" cy="11" r="9.300" /><path d="M11 5.500V11h4.500" /></svg></button>
          </footer>
        </div>
      </section>

      <aside class="crm">
        <div class="card">
          <svg width="40" height="40" viewBox="0 0 40 40" fill="none" stroke="#202422" stroke-width="1.800"><circle cx="20" cy="19" r="18.500" /><circle cx="20" cy="15" r="6.600" /><path d="M7.500 32.500Q10 25.500 20 25.500T32.500 32.500" /></svg>
          <div><div class="number">6586199150</div><span class="tag">6586199150</span></div>
        </div>
        <button class="summary">
          <svg width="16" height="17" viewBox="0 0 16 17"><path d="M1.500 0H10l6 6v9.500a1.500 1.500 0 0 1-1.500 1.500h-13A1.500 1.500 0 0 1 0 15.500v-14A1.500 1.500 0 0 1 1.500 0z" fill="#25305b" /><path d="M10.500 1.200V5.800H15z" fill="#d3f5e0" /><path d="M3.500 4h1.800v1.600H3.500zM3.500 7.700h1.800v1.600H3.500zM3.500 11.400h1.800V13H3.500z" fill="#d3f5e0" /></svg>
          SUMMARY
        </button>
        <p class="empty">No records for this tab. Click on below<br />Create button to Create new records.</p>
        <div class="actions">
          <button v-for="a in createActions" :key="a"><svg width="9" height="9" viewBox="0 0 9 9"><path d="M4.500 0v9M0 4.500h9" stroke="#fff" stroke-width="1.200" /></svg>{{ a }}</button>
        </div>
      </aside>

      <nav class="tools">
        <button v-for="t in toolsTop" :key="t.name" class="tool" :class="{ rule: t.rule }" :aria-label="t.name"><svg width="16" height="16" viewBox="0 0 24 24"><path :d="t.d" /></svg></button>
        <span class="grow"></span>
        <button v-for="t in toolsBottom" :key="t.name" class="tool" :aria-label="t.name"><svg width="16" height="16" viewBox="0 0 24 24"><path :d="t.d" /></svg></button>
      </nav>
    </main>
  </div>
</template>

<style>
html, body, #app { height: 100%; }
body { margin: 0; overflow: hidden; }
</style>

<style scoped>
* { box-sizing: border-box; }
.app { display: flex; flex-direction: column; height: 100%; font-family: "Open Sans", "Noto Sans", "Noto Sans CJK SC", sans-serif; font-size: 14px; color: #fafafa; }
button { font: inherit; color: inherit; background: none; border: 0; padding: 0; cursor: pointer; }
input { font: inherit; background: none; border: 0; outline: 0; padding: 0; min-width: 0; flex: 1; color: #fafafa; }
input::placeholder { color: #a5a6a6; opacity: 1; }
svg { display: block; flex: none; }
.plain { display: flex; align-items: center; }
.grow { flex: 1; }
.mark { position: absolute; border: 3px solid #f00; pointer-events: none; z-index: 5; }

.topbar { display: flex; align-items: center; flex: none; height: 42px; background: #f0f1f6; border-top: 1px solid #43464b; color: #26304f; font-size: 12px; }
.brand { display: flex; width: 58px; height: 14px; margin-left: 1px; line-height: 14px; color: #fff; font-family: Lato, sans-serif; font-weight: 900; background: #ee6a5b; }
.brand-suite { width: 30px; text-align: center; font-size: 7px; }
.brand-crm { flex: 1; text-align: center; font-size: 10px; background: #544f66; border-radius: 5px 0 0 5px; }
.ln { fill: none; stroke: #707276; stroke-width: 2; }
.arrow .ln { stroke-width: 1.5px; }
.arrow { margin-left: 14px; }
.badge { display: inline-flex; align-items: center; justify-content: center; min-width: 16px; height: 17px; padding: 0 5px; border-radius: 9px; background: #25d366; color: #fff; font-size: 10px; font-weight: 700; }
.first { margin: 0 7px 0 14px; padding: 0 4px; border-radius: 4px 9px 9px 4px; min-width: 25px; }
.tabs { display: flex; height: 100%; }
.tab { position: relative; display: flex; align-items: center; gap: 8px; padding: 0 6px 0 7px; }
.tab.active::after { content: ""; position: absolute; left: 0; right: 0; bottom: 2px; height: 3px; background: #25d366; }
.mark-tab { left: 3px; right: 0; top: 4px; bottom: -3px; }
.next { margin-left: 12px; }
.add { margin-left: 22px; }
.more { margin-left: 17px; }

.body { display: flex; flex: 1; min-height: 0; background: #161717; }
.rail { display: flex; flex-direction: column; align-items: center; width: 59px; padding: 9px 2px 4px 0; border-right: 1px solid #303131; background: #1d1f1f; }
.rail-btn { position: relative; display: flex; align-items: center; justify-content: center; width: 36px; height: 40px; flex: none; }
.rail-btn.short { height: 39px; }
.rail-btn.current::before { content: ""; position: absolute; left: 0; top: 2px; width: 36px; height: 36px; border-radius: 50%; background: #292b2b; }
.rail-btn svg { position: relative; }
.rail-count { position: absolute; right: -2px; top: -2px; width: 19px; height: 14px; border-radius: 7px; background: #21c063; color: #0a1510; font-size: 10px; line-height: 14px; text-align: center; }
.gl { fill: none; stroke: #a5a6a6; stroke-width: 1.600; }
.dot { position: absolute; right: 1px; top: 1px; width: 7px; height: 7px; border-radius: 50%; background: #21c063; }
.rail-rule { width: 36px; margin: 0; border: 0; border-top: 1px solid #3a3b3b; }
.meta-ring { width: 18px; height: 18px; border-radius: 50%; background: conic-gradient(#b06cf0, #6a5cf5 60deg, #1a63f4 130deg, #0a9df8 190deg, #20d5f0 240deg, #0a6af5 290deg, #3d66ff 330deg, #b06cf0); padding: 3px; }
.meta-ring::before { content: ""; display: block; width: 12px; height: 12px; border-radius: 50%; background: #1d1f1f; }
.me { display: grid; place-items: center; width: 27px; height: 27px; border-radius: 50%; border: 1px solid #3a3b3b; background: #242626; }

.list { position: relative; display: flex; flex-direction: column; width: 329px; flex: none; border-right: 1px solid #303131; }
.list-head { display: flex; align-items: center; height: 58px; padding: 0 34px 0 17px; }
h1 { flex: 1; margin: 0; font-family: Inter, sans-serif; font-size: 18px; font-weight: 600; }
.newchat { margin: 0 31px 0 15px; }
.search { display: flex; align-items: center; gap: 13px; height: 36px; margin: 0 18px 0 17px; padding: 0 15px; border-radius: 18px; background: #2e2f2f; font-size: 13px; }
.chips { display: flex; gap: 7px; margin: 9px 17px 0; }
.chip { height: 29px; padding: 0 11px; border: 1px solid #303232; border-radius: 15px; color: #a5a6a6; font-size: 12px; font-weight: 600; }
.chip.on { background: #103529; border-color: #1f4e3c; color: #d9fdd3; }
.archived { display: flex; align-items: center; height: 60px; padding: 4px 27px 0 33px; text-align: left; }
.archived span { flex: 1; margin-left: 27px; font-size: 14px; }
.archived small { color: #a5a6a6; font-size: 11px; }
.pinned { position: relative; margin: 0 9px 0 8px; padding-bottom: 14px; }
.pinned::after { content: ""; display: block; position: absolute; left: 6px; right: 5px; bottom: 0; border-bottom: 1px solid #303131; }
.mark-chat { left: -16px; right: -7px; top: -11px; bottom: -9px; }
.chat-item { display: flex; align-items: center; gap: 13px; width: 100%; height: 65px; padding: 0 14px 0 11px; border-radius: 12px; background: #2e2f2f; text-align: left; }
.avatar { position: relative; display: grid; place-items: center; flex: none; width: 38px; height: 38px; border: 1px solid #333535; border-radius: 50%; background: #242626; }
.avatar.big { width: 46px; height: 46px; border-color: #414343; }
.timer { position: absolute; right: -2px; bottom: -2px; display: grid; place-items: center; width: 18px; height: 18px; border-radius: 50%; background: #161717; }
.chat-text { flex: 1; min-width: 0; display: flex; flex-direction: column; padding-top: 2px; }
.row { display: flex; align-items: center; justify-content: space-between; height: 22px; white-space: nowrap; }
.row b { font-size: 14px; font-weight: 400; }
.row time { font-size: 11px; color: #a5a6a6; }
.row svg { margin-right: 3px; }
.preview { color: #a5a6a6; font-size: 12px; }
.e2e { display: flex; justify-content: center; align-items: center; gap: 4px; margin: 9px 0 0; font-size: 11px; line-height: 16px; white-space: nowrap; }
.e2e a { color: #21c063; font-weight: 600; text-decoration: none; }

.chat { display: flex; flex-direction: column; flex: 1; min-width: 0; border-right: 1px solid #2b2c2c; }
.chat-head { display: flex; align-items: center; height: 58px; flex: none; padding: 0 30px 0 12px; }
.peer { display: flex; flex-direction: column; flex: 1; margin-left: 13px; line-height: 19px; }
.peer b { font-size: 14px; font-weight: 600; }
.peer span { font-size: 12px; color: #a5a6a6; }
.video { gap: 10px; }
.find { margin: 0 33px 0 26px; }
.canvas { position: relative; display: flex; flex-direction: column; flex: 1; min-height: 0; overflow: hidden; }
.wallpaper { position: absolute; left: 0; top: 0; width: 100%; height: 100%; fill: none; stroke: #232525; stroke-width: 4; stroke-linejoin: round; stroke-linecap: round; }
.wallpaper text { stroke-width: 3; }
.tri { position: absolute; right: 3px; border: 3px solid transparent; }
.tri.up { top: 2px; border-bottom-color: #444; }
.tri.down { bottom: 63px; border-top-color: #444; }
.messages { position: relative; display: flex; flex-direction: column; align-items: center; justify-content: flex-end; flex: 1; padding: 0 10px 27px 0; }
.pill { display: flex; align-items: center; gap: 5px; flex: none; height: 29px; padding: 0 10px; border-radius: 8px; background: #1d1f1f; color: #a5a6a6; font-size: 11px; white-space: nowrap; }
.date { height: 22px; margin: 17px 0 11px; font-weight: 600; }
.notice { color: #ffd279; }
.clip { display: flex; justify-content: center; align-self: stretch; margin-top: 10px; overflow: hidden; }
.wide { height: 29px; }
.composer { position: relative; display: flex; align-items: center; padding: 0 14px 6px 10px; gap: 11px; }
.compose-box { display: flex; align-items: center; flex: 1; height: 47px; padding: 0 16px; border-radius: 24px; background: #242626; font-size: 13px; }
.sticker { margin: 0 14px 0 19px; }
.status { width: 8px; height: 8px; margin-right: 19px; border: 1px solid #d5efe9; border-radius: 50%; background: #0a8f78; }

.crm { width: 297px; flex: none; padding: 9px 9px 0; background: #fff; color: #333b44; }
.card { display: flex; align-items: center; gap: 9px; height: 69px; padding: 0 14px; border-radius: 5px; background: #dff7e7; }
.number { font-size: 14px; line-height: 20px; }
.tag { display: inline-block; height: 29px; padding: 0 11px; border-radius: 15px; background: #cde4d5; color: #202422; font-size: 11px; line-height: 29px; }
.summary { display: flex; align-items: center; justify-content: center; gap: 10px; width: 100%; height: 43px; margin-top: 13px; padding-left: 10px; background: #d3f5e0; color: #25305b; font-size: 11px; font-weight: 500; }
.empty { margin: 14px 0 13px; text-align: center; font-size: 14px; line-height: 22px; white-space: nowrap; }
.actions { display: flex; flex-direction: column; gap: 18px; width: 70%; margin: 0 auto; }
.actions button { display: flex; align-items: center; gap: 9px; height: 29px; padding: 0 13px; border-radius: 4px; background: #25d366; color: #fff; font-size: 12px; font-weight: 700; box-shadow: 0 1px 3px rgba(0, 0, 0, 0.4); }

.tools { display: flex; flex-direction: column; width: 43px; flex: none; padding: 1px 0 2px; background: #dff7e7; }
.tool { position: relative; display: grid; place-items: center; height: 46px; flex: none; }
.tool svg { fill: #6d7c73; }
.tool.rule::after { content: ""; position: absolute; left: 13px; bottom: 0; width: 17px; height: 1px; background: #b9cfc1; }
</style>
